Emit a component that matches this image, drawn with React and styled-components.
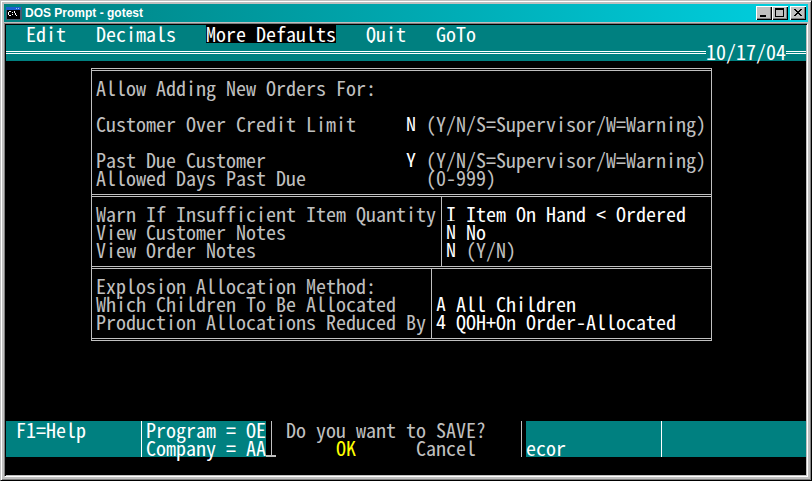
import React, { useState } from 'react'
import styled, { createGlobalStyle, css } from 'styled-components';

const TEAL = '#008080';
const SILVER = '#c0c0c0';

function App() {
    const [form, setForm] = useState({
        overCredit: 'N',
        pastDue: 'Y',
        daysPastDue: '',
        warnQuantity: 'I',
        customerNotes: 'N',
        orderNotes: 'N',
        children: 'A',
        reducedBy: '4'
    });

    const changeHandler = (e) => {
        setForm({ ...form, [e.target.name]: e.target.value })
    }

    const field = (name) => ({ id: name, name, value: form[name], onChange: changeHandler, size: 1, maxLength: 1 })

    return (
        <Window>
            <GlobalStyle />
            <TitleBar>
                <PromptIcon />
                <Title>DOS Prompt - gotest</Title>
                <Controls>
                    <ControlButton aria-label="Minimize">
                        <Glyph viewBox="0 0 12 10"><path d="M2 7h6v2H2z" /></Glyph>
                    </ControlButton>
                    <ControlButton aria-label="Maximize">
                        <Glyph viewBox="0 0 12 10"><path fillRule="evenodd" d="M1 0h9v9H1zM2 2v6h7V2z" /></Glyph>
                    </ControlButton>
                    <ControlButton aria-label="Close" $apart>
                        <Glyph viewBox="0 0 12 10">
                            <path d="M2 1h2v1h1v1h2V2h1V1h2v1H9v1H8v1H7v1h1v1h1v1h1v1H8V7H7V6H5v1H4v1H2V7h1V6h1V5h1V4H4V3H3V2H2z" />
                        </Glyph>
                    </ControlButton>
                </Controls>
            </TitleBar>
            <Screen>
                <Menu>
                    <MenuItem>Edit</MenuItem>
                    <MenuItem>Decimals</MenuItem>
                    <MenuItem $active>More Defaults</MenuItem>
                    <MenuItem>Quit</MenuItem>
                    <MenuItem>GoTo</MenuItem>
                </Menu>
                <DateRow>
                    <DoubleRule $grow />
                    <span>10/17/04</span>
                    <DoubleRule />
                </DateRow>

                <Panel>
                    <Section>
                        <Labels $full>
                            <Line>Allow Adding New Orders For:</Line>
                            <Line />
                            <OrderLine>
                                <label htmlFor="overCredit">Customer Over Credit Limit</label>
                                <Field {...field('overCredit')} />
                                <span>(Y/N/S=Supervisor/W=Warning)</span>
                            </OrderLine>
                            <Line />
                            <OrderLine>
                                <label htmlFor="pastDue">Past Due Customer</label>
                                <Field {...field('pastDue')} />
                                <span>(Y/N/S=Supervisor/W=Warning)</span>
                            </OrderLine>
                            <OrderLine>
                                <label htmlFor="daysPastDue">Allowed Days Past Due</label>
                                <Field {...field('daysPastDue')} />
                                <span>(0-999)</span>
                            </OrderLine>
                        </Labels>
                    </Section>
                    <Section>
                        <Labels $cols={35}>
                            <Line as="label" htmlFor="warnQuantity">Warn If Insufficient Item Quantity</Line>
                            <Line as="label" htmlFor="customerNotes">View Customer Notes</Line>
                            <Line as="label" htmlFor="orderNotes">View Order Notes</Line>
                        </Labels>
                        <Values>
                            <ValueLine><Field {...field('warnQuantity')} />Item On Hand &lt; Ordered</ValueLine>
                            <ValueLine><Field {...field('customerNotes')} />No</ValueLine>
                            <ValueLine $dim><Field {...field('orderNotes')} />(Y/N)</ValueLine>
                        </Values>
                    </Section>
                    <Section>
                        <Labels $cols={34}>
                            <Line>Explosion Allocation Method:</Line>
                            <Line as="label" htmlFor="children">Which Children To Be Allocated</Line>
                            <Line as="label" htmlFor="reducedBy">Production Allocations Reduced By</Line>
                        </Labels>
                        <Values>
                            <Line />
                            <ValueLine><Field {...field('children')} />All Children</ValueLine>
                            <ValueLine><Field {...field('reducedBy')} />QOH+On Order-Allocated</ValueLine>
                        </Values>
                    </Section>
                </Panel>

                <StatusBar>
                    <HelpCell>F1=Help</HelpCell>
                    <ProgramCell>
                        <Line>Program = OE</Line>
                        <Line>Company = AA</Line>
                    </ProgramCell>
                    <SavePrompt>
                        <Cursor />
                        <Question>Do you want to SAVE?</Question>
                        <Answers>
                            <PromptButton $selected>OK</PromptButton>
                            <PromptButton>Cancel</PromptButton>
                        </Answers>
                    </SavePrompt>
                    <NameCell>ecor</NameCell>
                    <EndCell />
                </StatusBar>
            </Screen>
        </Window>
    )
}

export default App;

function PromptIcon() {
    return (
        <svg width="16" height="14" viewBox="0 0 16 14" shapeRendering="crispEdges" aria-hidden="true">
            <path fill="#4a5a70" d="M0 1h16v13H0z" />
            <path fill="#1c5fd0" d="M0 1h15v3H0z" />
            <path fill="#9cc4f8" d="M10 2h1v1h-1zM12 2h1v1h-1z" />
            <path fill="#000" d="M1 4h13v9H1z" />
            <path fill="#fff" d="M3 5h2v1H3zM2 6h1v3H2zM3 9h2v1H3zM6 6h1v1H6zM6 8h1v1H6zM8 5h1v2H8zM9 7h1v2H9zM10 9h1v1h-1z" />
        </svg>
    )
}

const GlobalStyle = createGlobalStyle`
    * { box-sizing: border-box; }
    body { margin: 0; background: #000; }
    button, input {
        margin: 0;
        padding: 0;
        border: 0;
        border-radius: 0;
        background: none;
        color: inherit;
        font: inherit;
    }
`
const Window = styled.div`
    display: flex;
    flex-direction: column;
    min-height: 100vh;
    padding: 3px;
    background: ${SILVER};
    border: 1px solid;
    border-color: ${SILVER} #000 #000 ${SILVER};
    box-shadow: inset 1px 1px #fff, inset -1px -1px #808080;
`
const TitleBar = styled.header`
    display: flex;
    align-items: center;
    height: 18px;
    padding: 0 2px;
    color: #fff;
    background: linear-gradient(to right, #008080, #00d0e0);
`
const Title = styled.h1`
    flex: 1;
    margin: 0 0 0 3px;
    font: bold 12px/18px "Liberation Sans", sans-serif;
`
const Controls = styled.div`
    display: flex;
`
const ControlButton = styled.button`
    display: flex;
    width: 16px;
    height: 14px;
    padding: 2px !important;
    background: ${SILVER} !important;
    box-shadow: inset 1px 1px #fff, inset -1px -1px #000, inset -2px -2px #808080;
    ${(p) => p.$apart && css`margin-left: 2px !important;`}
`
const Glyph = styled.svg`
    width: 12px;
    height: 10px;
    fill: #000;
    shape-rendering: crispEdges;
`
const Screen = styled.main`
    flex: 1;
    display: flex;
    flex-direction: column;
    margin-top: 1px;
    border: 1px solid;
    border-color: #808080 #fff #fff #808080;
    box-shadow: inset 1px 1px #000, inset -1px -1px ${SILVER};
    padding: 1px;
    background: #000;
    color: ${SILVER};
    font: 20px/18px "Noto Sans Mono CJK SC", "Noto Sans Mono CJK JP", "Liberation Mono", monospace;
    white-space: pre;
`
const Menu = styled.nav`
    display: flex;
    gap: 30px;
    height: 18px;
    padding-left: 20px;
    background: ${TEAL};
    color: #fff;
`
const MenuItem = styled.button`
    height: 18px;
    ${(p) => p.$active && css`background: #000 !important;`}
`
const DateRow = styled.div`
    display: flex;
    align-items: center;
    height: 18px;
    background: ${TEAL};
    color: #fff;
`
const DoubleRule = styled.div`
    width: 20px;
    height: 3px;
    border: solid #fff;
    border-width: 1px 0;
    ${(p) => p.$grow && css`flex: 1;`}
`
const Panel = styled.form`
    width: 621px;
    max-width: 100%;
    margin: 7px auto 0 85px;
    border: 1px solid ${SILVER};
`
const Section = styled.section`
    display: flex;
    margin-top: 1px;
    border-top: 1px solid ${SILVER};
    border-bottom: 1px solid ${SILVER};
    &:last-child { margin-bottom: 1px; }
`
const Labels = styled.div`
    padding: 8px 0 7px 4px;
    flex: none;
    width: ${(p) => (p.$full ? '100%' : `${p.$cols * 10 - 1}px`)};
`
const Values = styled.div`
    flex: 1;
    padding: 8px 0 7px 4px;
    border-left: 1px solid ${SILVER};
    color: #fff;
`
const Line = styled.div`
    display: block;
    height: 18px;
`
const OrderLine = styled.div`
    display: grid;
    grid-template-columns: 310px 20px 1fr;
    height: 18px;
`
const ValueLine = styled.div`
    display: flex;
    gap: 10px;
    height: 18px;
    color: ${(p) => (p.$dim ? SILVER : '#fff')};
`
const Field = styled.input`
    width: 10px;
    height: 16px;
    color: #fff !important;
    outline: 0;
`
const StatusBar = styled.footer`
    display: flex;
    height: 36px;
    margin: auto 0 18px;
    background: ${TEAL};
    color: #fff;
`
const HelpCell = styled.div`
    width: 135px;
    padding-left: 10px;
`
const ProgramCell = styled.div`
    width: 125px;
    padding-left: 4px;
    border-left: 1px solid #fff;
`
const SavePrompt = styled.div`
    position: relative;
    width: 260px;
    padding: 0 4px 0 5px;
    background: #000;
    color: ${SILVER};
`
const Cursor = styled.span`
    position: absolute;
    left: 0;
    bottom: 0;
    width: 10px;
    height: 2px;
    background: ${SILVER};
`
const Question = styled.div`
    height: 18px;
    padding-left: 14px;
    border: solid ${SILVER};
    border-width: 0 1px;
`
const Answers = styled.div`
    display: flex;
    gap: 60px;
    height: 18px;
    padding-left: 64px;
    border: solid ${SILVER};
    border-width: 0 1px;
`
const PromptButton = styled.button`
    height: 18px;
    ${(p) => p.$selected && css`color: #ff0 !important;`}
`
const NameCell = styled.div`
    width: 135px;
    padding-top: 18px;
`
const EndCell = styled.div`
    flex: 1;
    border-left: 1px solid #fff;
`
